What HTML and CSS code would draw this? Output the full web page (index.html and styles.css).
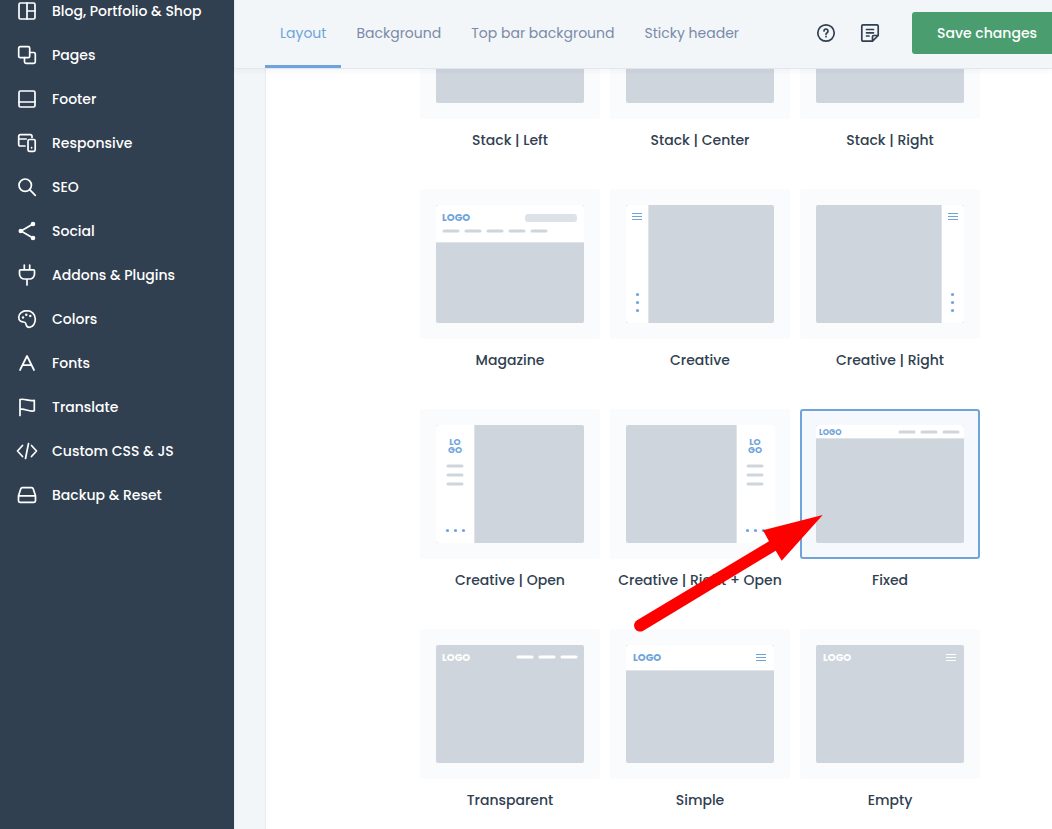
FILE: index.html
```html
<!DOCTYPE html>
<html lang="en">
<head>
<meta charset="utf-8">
<title>Header layout options</title>
<link rel="stylesheet" href="styles.css">
</head>
<body>
<div class="app">
  <nav class="sidebar" aria-label="Theme options">
    <a href="#blog"><svg class="icon" viewBox="0 0 22 22"><rect x="3" y="3" width="16" height="16" rx="1.5"/><path d="M11 3v16M11 11h8"/></svg>Blog, Portfolio &amp; Shop</a>
    <a href="#pages"><svg class="icon" viewBox="0 0 22 22"><rect x="2.7" y="2.7" width="11" height="11" rx="1.5"/><path d="M13.7 8.500h4.100a1.500 1.500 0 0 1 1.500 1.500v7.800a1.500 1.500 0 0 1-1.500 1.500h-7.800a1.500 1.500 0 0 1-1.500-1.500v-4.100"/></svg>Pages</a>
    <a href="#footer"><svg class="icon" viewBox="0 0 22 22"><rect x="3" y="3" width="16" height="16" rx="1.5"/><path d="M3 14h16"/></svg>Footer</a>
    <a href="#responsive"><svg class="icon" viewBox="0 0 22 22"><path d="M16 5.500V4.200A1.500 1.500 0 0 0 14.500 2.700H4.200A1.500 1.500 0 0 0 2.700 4.200V12.500A1.500 1.500 0 0 0 4.200 14H9M2.700 7h7.500"/><rect x="12" y="7.500" width="7.200" height="11.800" rx="1.500"/><path d="M15.600 15.500v.3"/></svg>Responsive</a>
    <a href="#seo"><svg class="icon" viewBox="0 0 22 22"><circle cx="9.200" cy="9.200" r="6.200"/><path d="M13.700 13.700l5.600 5.600"/></svg>SEO</a>
    <a href="#social"><svg class="icon" viewBox="0 0 22 22"><path d="M17 4L5 11l12 7"/><g class="solid"><circle cx="17" cy="4" r="2.300"/><circle cx="4.800" cy="11" r="2.300"/><circle cx="17" cy="18" r="2.300"/></g></svg>Social</a>
    <a href="#addons"><svg class="icon" viewBox="0 0 22 22"><path d="M8.300 1v4.800M13.700 1v4.800M4.500 5.800h13a1 1 0 0 1 1 1v3.200a5 5 0 0 1-5 5h-5a5 5 0 0 1-5-5v-3.200a1 1 0 0 1 1-1zM11 15v6"/></svg>Addons &amp; Plugins</a>
    <a href="#colors"><svg class="icon" viewBox="0 0 22 22"><path d="M11 2.700c-4.700 0-8.300 2.800-8.300 6.600 0 3 2.400 4.700 5 4.700 2.200 0 2 1.500 2.500 3 .5 1.500 1.600 2.300 3.100 2.300 3.800 0 6-4 6-8.300 0-4.700-3.600-8.300-8.300-8.300z"/><g class="solid"><circle cx="7" cy="9.500" r="1.200"/><circle cx="10.300" cy="6.700" r="1.200"/><circle cx="14.300" cy="8" r="1.200"/></g></svg>Colors</a>
    <a href="#fonts"><svg class="icon" viewBox="0 0 22 22"><path d="M4 18L11 4l7 14M6.300 13.200h9.400"/></svg>Fonts</a>
    <a href="#translate"><svg class="icon" viewBox="0 0 22 22"><path d="M4 19.500V3.600c4-1.600 9 2 14.300.7v10.500C13 16.500 8 11.700 4 13.500"/></svg>Translate</a>
    <a href="#custom"><svg class="icon" viewBox="0 0 22 22"><path d="M6.500 5.500L1.500 11l5 5.500M15.500 5.500l5 5.500-5 5.500M12.500 3.500l-3 15"/></svg>Custom CSS &amp; JS</a>
    <a href="#backup"><svg class="icon" viewBox="0 0 22 22"><path d="M6.200 3.700h9.600a1.500 1.500 0 0 1 1.400 1l2.300 7v5.100a1.500 1.500 0 0 1-1.500 1.500H4a1.500 1.500 0 0 1-1.500-1.500v-5.100l2.300-7a1.500 1.500 0 0 1 1.400-1zM2.500 11.800h17"/></svg>Backup &amp; Reset</a>
  </nav>

  <div class="main">
    <header class="topbar">
      <nav class="tabs" aria-label="Header sections">
        <a class="tab current" href="#layout" aria-current="page">Layout</a>
        <a class="tab" href="#background">Background</a>
        <a class="tab" href="#topbar-background">Top bar background</a>
        <a class="tab" href="#sticky">Sticky header</a>
      </nav>
      <div class="tools">
        <button class="tool" type="button" aria-label="Help"><svg class="icon" viewBox="0 0 22 22"><circle cx="11" cy="11" r="8.200"/><path d="M9 9a2 2 0 1 1 3.100 1.700c-.8.500-1.100.8-1.100 1.500M11 14.300v.4"/></svg></button>
        <button class="tool" type="button" aria-label="Notes"><svg class="icon" viewBox="0 0 22 22"><path d="M13.500 19.200H4A1.200 1.200 0 0 1 2.800 18V4A1.200 1.200 0 0 1 4 2.800h14A1.200 1.200 0 0 1 19.200 4v9.500l-5.700 5.700v-4.500a1.200 1.200 0 0 1 1.200-1.200h4.500M7.500 7.500h7M7.500 10.800h7M7.500 14h2.500"/></svg></button>
      </div>
      <button class="save" type="button">Save changes</button>
    </header>

    <main class="stage">
      <div class="panel">
        <form class="layouts" aria-label="Header layout">
          <label class="option"><input type="radio" name="layout"><span class="card"><svg class="thumb" viewBox="0 0 148 118"><rect class="page" width="148" height="118" rx="2"/></svg></span>Stack | Left</label>
          <label class="option"><input type="radio" name="layout"><span class="card"><svg class="thumb" viewBox="0 0 148 118"><rect class="page" width="148" height="118" rx="2"/></svg></span>Stack | Center</label>
          <label class="option"><input type="radio" name="layout"><span class="card"><svg class="thumb" viewBox="0 0 148 118"><rect class="page" width="148" height="118" rx="2"/></svg></span>Stack | Right</label>

          <label class="option"><input type="radio" name="layout"><span class="card"><svg class="thumb" viewBox="0 0 148 118"><rect class="page" width="148" height="118" rx="2"/><path class="paper" d="M0 37V3a3 3 0 0 1 3-3h142a3 3 0 0 1 3 3v34z"/><path class="edge" d="M0 37.500h148"/><text class="logo" x="6" y="16">LOGO</text><rect class="search" x="89" y="9" width="52" height="8" rx="3"/><path class="dash" d="M8 26h14M30 26h14M52 26h14M74 26h14M96 26h14"/></svg></span>Magazine</label>
          <label class="option"><input type="radio" name="layout"><span class="card"><svg class="thumb" viewBox="0 0 148 118"><rect class="page" width="148" height="118" rx="2"/><path class="paper" d="M22 0H3a3 3 0 0 0-3 3v112a3 3 0 0 0 3 3h19z"/><path class="edge" d="M22.500 0v118"/><path class="menu" d="M6 8.500h10M6 11.500h10M6 14.500h10"/><g class="dots"><circle cx="11.500" cy="89.500" r="1.600"/><circle cx="11.500" cy="97.500" r="1.600"/><circle cx="11.500" cy="105.500" r="1.600"/></g></svg></span>Creative</label>
          <label class="option"><input type="radio" name="layout"><span class="card"><svg class="thumb" viewBox="0 0 148 118"><rect class="page" width="148" height="118" rx="2"/><path class="paper" d="M126 0h19a3 3 0 0 1 3 3v112a3 3 0 0 1-3 3h-19z"/><path class="edge" d="M125.500 0v118"/><path class="menu" d="M132 8.500h10M132 11.500h10M132 14.500h10"/><g class="dots"><circle cx="136.500" cy="89.500" r="1.600"/><circle cx="136.500" cy="97.500" r="1.600"/><circle cx="136.500" cy="105.500" r="1.600"/></g></svg></span>Creative | Right</label>

          <label class="option"><input type="radio" name="layout"><span class="card"><svg class="thumb" viewBox="0 0 148 118"><rect class="page" width="148" height="118" rx="2"/><path class="paper" d="M38 0H3a3 3 0 0 0-3 3v112a3 3 0 0 0 3 3h35z"/><path class="edge" d="M38.500 0v118"/><text class="logo stacked" x="19" y="20">LO</text><text class="logo stacked" x="19" y="28">GO</text><path class="dash" d="M12 41h14M12 50h14M12 59h14"/><g class="dots"><circle cx="11.500" cy="105.500" r="1.600"/><circle cx="19.500" cy="105.500" r="1.600"/><circle cx="27.500" cy="105.500" r="1.600"/></g></svg></span>Creative | Open</label>
          <label class="option"><input type="radio" name="layout"><span class="card"><svg class="thumb" viewBox="0 0 148 118"><rect class="page" width="148" height="118" rx="2"/><path class="paper" d="M111 0h35a3 3 0 0 1 3 3v112a3 3 0 0 1-3 3h-35z"/><path class="edge" d="M110.500 0v118"/><text class="logo stacked" x="129" y="20">LO</text><text class="logo stacked" x="129" y="28">GO</text><path class="dash" d="M122 41h14M122 50h14M122 59h14"/><g class="dots"><circle cx="121.500" cy="105.500" r="1.600"/><circle cx="129.500" cy="105.500" r="1.600"/><circle cx="137.500" cy="105.500" r="1.600"/></g></svg></span>Creative | Right + Open</label>
          <label class="option"><input type="radio" name="layout" checked><span class="card"><svg class="thumb" viewBox="0 0 148 118"><rect class="page" width="148" height="118" rx="2"/><path class="paper" d="M0 13V3a3 3 0 0 1 3-3h142a3 3 0 0 1 3 3v10z"/><path class="edge" d="M0 13.500h148"/><text class="logo small" x="3" y="10">LOGO</text><path class="dash" d="M84 7h14M106 7h14M128 7h14"/></svg></span>Fixed
            <svg class="arrow" viewBox="0 0 190 118" aria-hidden="true"><path d="M3 105.300L135 26.300 129 15.300 188.700 0 147.700 45.700 141.700 35.700 9.300 115.700A6 6 0 0 1 3 105.300z"/></svg></label>

          <label class="option"><input type="radio" name="layout"><span class="card"><svg class="thumb" viewBox="0 0 148 118"><rect class="page" width="148" height="118" rx="2"/><text class="logo light" x="6" y="16">LOGO</text><path class="dash light-line" d="M82 12h14M104 12h14M126 12h14"/></svg></span>Transparent</label>
          <label class="option"><input type="radio" name="layout"><span class="card"><svg class="thumb" viewBox="0 0 148 118"><rect class="page" width="148" height="118" rx="2"/><path class="paper" d="M0 25V3a3 3 0 0 1 3-3h142a3 3 0 0 1 3 3v22z"/><path class="edge" d="M0 25.500h148"/><text class="logo" x="7" y="16">LOGO</text><path class="menu" d="M130 9.500h10M130 12.500h10M130 15.500h10"/></svg></span>Simple</label>
          <label class="option"><input type="radio" name="layout"><span class="card"><svg class="thumb" viewBox="0 0 148 118"><rect class="page" width="148" height="118" rx="2"/><text class="logo light" x="7" y="16">LOGO</text><path class="menu light-line" d="M130 9.500h10M130 12.500h10M130 15.500h10"/></svg></span>Empty</label>
        </form>
      </div>
    </main>
  </div>
</div>
</body>
</html>
```
FILE: styles.css
```css
* { box-sizing: border-box; }

body {
  margin: 0;
  font: 500 14px/22px Poppins, Inter, "Open Sans", sans-serif;
  color: #304050;
  background: #f2f6f9;
}

a { color: inherit; text-decoration: none; }

button { border: 0; padding: 0; font: inherit; color: inherit; background: none; cursor: pointer; }

.app { display: flex; height: 100vh; overflow: hidden; }

.icon {
  flex: none;
  width: 22px;
  height: 22px;
  fill: none;
  stroke: currentColor;
  stroke-width: 1.7;
  stroke-linecap: round;
  stroke-linejoin: round;
}
.icon .solid { fill: currentColor; stroke: none; }

.sidebar {
  flex: none;
  display: flex;
  flex-direction: column;
  gap: 22px;
  width: 234px;
  padding: 0 16px;
  color: #fff;
  background: #304050;
}
.sidebar a { display: flex; gap: 14px; white-space: nowrap; }

.main { flex: 1; display: flex; flex-direction: column; min-width: 0; border-left: 1px solid #e8ecf5; }

.topbar {
  position: relative;
  z-index: 1;
  flex: none;
  display: flex;
  align-items: center;
  height: 69px;
  padding-left: 30px;
  border-bottom: 1px solid #e1e6f0;
  background: #f2f6f9;
  box-shadow: 0 2px 6px rgba(48, 64, 80, .05);
}
.tabs { display: flex; align-self: stretch; }
.tab {
  display: flex;
  align-items: center;
  padding: 1px 15px 0;
  border-bottom: 3px solid transparent;
  font-weight: 400;
  color: #7b8aa8;
  white-space: nowrap;
}
.tab.current { color: #6fa4db; border-bottom-color: #6fa4db; border-radius: 2px 2px 0 0; }

.tools { display: flex; gap: 22px; margin: 0 31px 2px auto; }
.tool { display: flex; }

.save {
  height: 42px;
  margin-bottom: 2px;
  padding: 0 15px 0 25px;
  border-radius: 3px 0 0 3px;
  color: #fff;
  background: #4a9d6e;
  white-space: nowrap;
}

.stage { flex: 1; min-height: 0; padding-left: 30px; overflow: hidden; }
.panel {
  display: flow-root;
  min-height: 100%;
  padding: 0 0 40px 154px;
  border-left: 1px solid #e8ecf2;
  background: #fff;
}

/* The list is shown part way through its scroll. */
.layouts {
  display: grid;
  grid-template-columns: repeat(3, 180px);
  gap: 38px 10px;
  margin-top: -100px;
}
.option {
  position: relative;
  display: flex;
  flex-direction: column;
  align-items: center;
  gap: 10px;
  white-space: nowrap;
  cursor: pointer;
}
.option input { position: absolute; opacity: 0; margin: 0; }

.card { padding: 14px; border: 2px solid #fafbfd; border-radius: 3px; background: #fafbfd; }
input:checked + .card { border-color: #6fa4db; background: #f5f8fc; }

.thumb { display: block; width: 148px; height: 118px; overflow: visible; }
.page { fill: #ced5dc; }
.paper { fill: #fff; }
.edge { stroke: #dfe4e8; }
.search { fill: #dde2e9; }
.dash { stroke: #ced5dc; stroke-width: 3; stroke-linecap: round; }
.menu { stroke: #6fa4db; }
.light-line { stroke: #fff; }
.dots { fill: #6fa4db; }
.logo { font-size: 10px; font-weight: 700; fill: #6fa4db; }
.logo.small { font-size: 8px; }
.logo.stacked { font-size: 9px; text-anchor: middle; }
.logo.light { fill: #fff; }

.arrow {
  position: absolute;
  top: 106px;
  right: 156px;
  z-index: 1;
  width: 190px;
  height: 118px;
  fill: #f00;
  pointer-events: none;
}
```
